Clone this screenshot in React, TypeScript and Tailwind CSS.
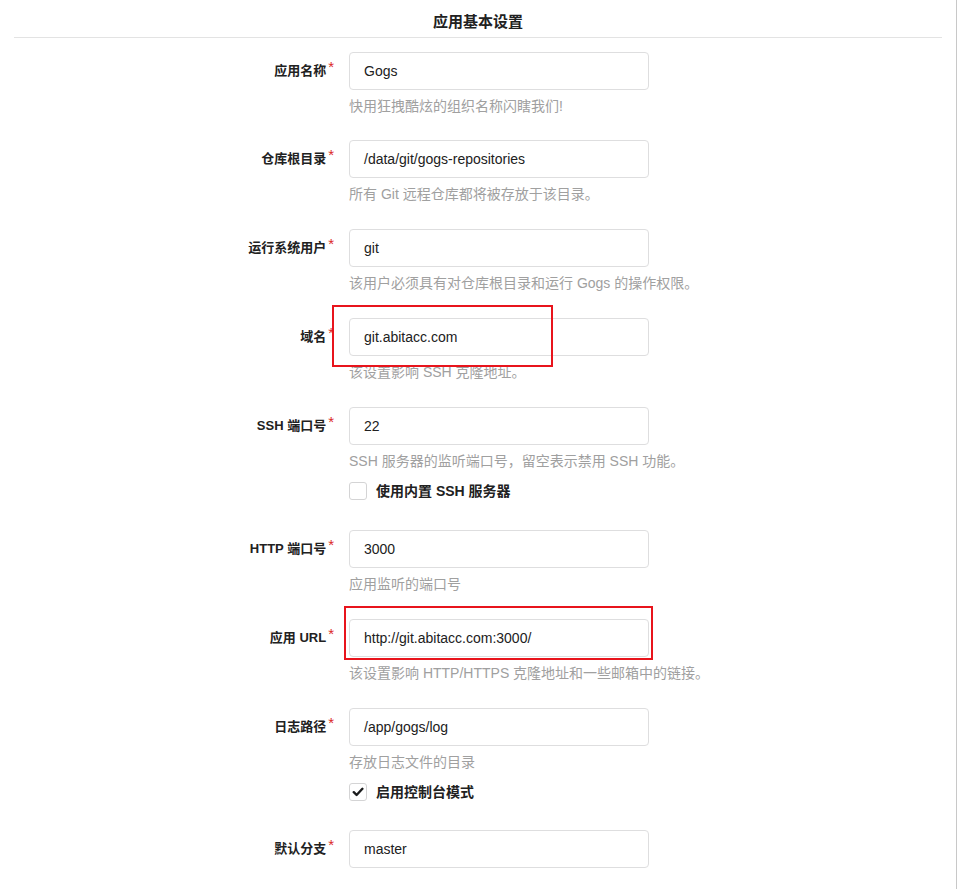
import React from "react";

const FONT = { fontFamily: '"Liberation Sans", Arial, "Noto Sans CJK SC", sans-serif' };

type FieldProps = {
  label: string;
  value: string;
  help: string;
  checkbox?: { label: string; checked: boolean };
  tight?: boolean;
};

function Field({ label, value, help, checkbox, tight }: FieldProps) {
  const mb = checkbox ? (tight ? "mb-[28px]" : "mb-[29px]") : "mb-[25px]";
  return (
    <div className={"flex " + mb}>
      <div className="w-[334px] h-[38px] flex items-center justify-end">
        <span className="text-[13px] font-bold text-[#212121] leading-[20px]">{label}</span>
        <span className="text-[15px] text-[#db2828] ml-[2px] leading-[20px] relative -top-[4px]">*</span>
      </div>
      <div className="ml-[15px] w-[300px] flex flex-col">
        <div className="h-[38px] border border-[#dededf] rounded-[4px] px-[14px] flex items-center text-[14px] text-[#212121] bg-white">
          {value}
        </div>
        <div className="mt-[6px] leading-[20px] text-[14px] text-[#a0a0a0] whitespace-nowrap">{help}</div>
        {checkbox && (
          <div className="mt-[10px] h-[20px] flex items-center">
            <div className="w-[18px] h-[18px] border border-[#d4d4d5] rounded-[3px] bg-white flex items-center justify-center">
              {checkbox.checked && (
                <svg width="12" height="12" viewBox="0 0 12 12">
                  <path d="M1.8 6.2 L4.6 9 L10.4 2.8" fill="none" stroke="#1b1c1d" strokeWidth="2.4" strokeLinecap="round" strokeLinejoin="round" />
                </svg>
              )}
            </div>
            <span className="ml-[9px] text-[14px] font-bold text-[#212121] whitespace-nowrap">{checkbox.label}</span>
          </div>
        )}
      </div>
    </div>
  );
}

export default function App() {
  return (
    <div className="relative w-[957px] h-[889px] overflow-hidden bg-white border-r border-[#c8c8c8]" style={FONT}>
      <div className="mx-[14px] pt-[12px] pb-[5px] border-b border-[#e3e3e3] text-center leading-[20px] text-[15px] font-bold text-[#212121]">
        应用基本设置
      </div>
      <div className="mt-[14px]">
        <Field label="应用名称" value="Gogs" help="快用狂拽酷炫的组织名称闪瞎我们!" />
        <div className="-mt-[1px]" />
        <Field label="仓库根目录" value="/data/git/gogs-repositories" help="所有 Git 远程仓库都将被存放于该目录。" />
        <Field label="运行系统用户" value="git" help="该用户必须具有对仓库根目录和运行 Gogs 的操作权限。" />
        <Field label="域名" value="git.abitacc.com" help="该设置影响 SSH 克隆地址。" />
        <Field
          label="SSH 端口号"
          value="22"
          help="SSH 服务器的监听端口号，留空表示禁用 SSH 功能。"
          checkbox={{ label: "使用内置 SSH 服务器", checked: false }}
        />
        <Field label="HTTP 端口号" value="3000" help="应用监听的端口号" />
        <Field label="应用 URL" value="http://git.abitacc.com:3000/" help="该设置影响 HTTP/HTTPS 克隆地址和一些邮箱中的链接。" />
        <Field
          label="日志路径"
          value="/app/gogs/log"
          help="存放日志文件的目录"
          checkbox={{ label: "启用控制台模式", checked: true }}
          tight
        />
        <Field label="默认分支" value="master" help="" />
      </div>
      <div className="absolute left-[332px] top-[305px] w-[221px] h-[62px] border-2 border-[#e8141c] pointer-events-none" />
      <div className="absolute left-[344px] top-[606px] w-[309px] h-[54px] border-2 border-[#e8141c] pointer-events-none" />
    </div>
  );
}
